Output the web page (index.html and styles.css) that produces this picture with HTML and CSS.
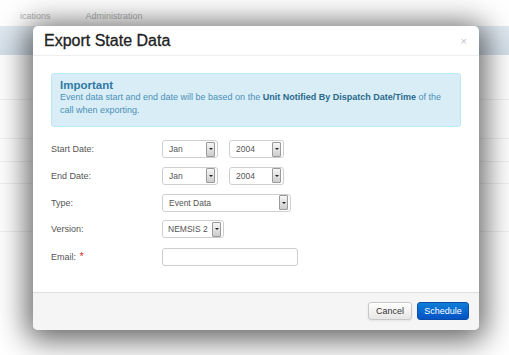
FILE: index.html
```html
<!DOCTYPE html>
<html>
<head>
<meta charset="utf-8">
<link rel="stylesheet" href="styles.css">
</head>
<body>
<div class="page">
  <div class="tabs">
    <span class="tab tab-first">ications</span>
    <span class="tab">Administration</span>
  </div>
  <div class="navbar"></div>
  <div class="content">
    <div class="row r1"></div>
    <div class="row r2"></div>
    <div class="row r3"></div>
    <div class="row r4"></div>
    <div class="row r5"></div>
  </div>
</div>

<div class="modal">
  <div class="modal-header">
    <h3 class="modal-title">Export State Data</h3>
    <span class="close">×</span>
  </div>
  <div class="modal-body">
    <div class="alert">
      <h4 class="alert-heading">Important</h4>
      <p class="alert-text">Event data start and end date will be based on the <b>Unit Notified By Dispatch Date/Time</b> of the call when exporting.</p>
    </div>
    <div class="form">
      <label class="label">Start Date:</label>
      <div class="controls">
        <div class="select w-month"><span class="value">Jan</span><span class="btn-arrow"><i class="tri"></i></span></div>
        <div class="select w-year"><span class="value">2004</span><span class="btn-arrow"><i class="tri"></i></span></div>
      </div>
      <label class="label">End Date:</label>
      <div class="controls">
        <div class="select w-month"><span class="value">Jan</span><span class="btn-arrow"><i class="tri"></i></span></div>
        <div class="select w-year"><span class="value">2004</span><span class="btn-arrow"><i class="tri"></i></span></div>
      </div>
      <label class="label">Type:</label>
      <div class="controls">
        <div class="select w-type"><span class="value">Event Data</span><span class="btn-arrow"><i class="tri"></i></span></div>
      </div>
      <label class="label">Version:</label>
      <div class="controls">
        <div class="select w-version"><span class="value">NEMSIS 2</span><span class="btn-arrow"><i class="tri"></i></span></div>
      </div>
      <label class="label">Email: <span class="req">*</span></label>
      <div class="controls">
        <div class="input"></div>
      </div>
    </div>
  </div>
  <div class="modal-footer">
    <button class="btn btn-default">Cancel</button>
    <button class="btn btn-primary">Schedule</button>
  </div>
</div>
</body>
</html>
```

FILE: styles.css
```css
html, body {
  margin: 0;
  padding: 0;
  background: #ffffff;
  font-family: "Liberation Sans", Arial, sans-serif;
  width: 509px;
  height: 355px;
  overflow: hidden;
}

.page {
  width: 509px;
  height: 355px;
}

.tabs {
  height: 26px;
  display: flex;
  align-items: flex-start;
  padding-top: 10px;
  box-sizing: border-box;
  font-size: 9px;
  line-height: 12px;
  color: #b0b0b0;
}

.tab-first {
  margin-left: 20px;
  margin-right: 35px;
}

.navbar {
  height: 29px;
  background: linear-gradient(#e2eaf1, #d3dfe9);
}

.content {
  display: flex;
  flex-direction: column;
}

.row {
  border-bottom: 1px solid #f1f1f1;
}
.r1 { height: 44px; }
.r2 { height: 38px; }
.r3 { height: 22px; }
.r4 { height: 21px; }
.r5 { height: 47px; }

.modal {
  position: absolute;
  left: 33px;
  top: 26px;
  width: 446px;
  background: #ffffff;
  border-radius: 5px;
  box-shadow: 0 4px 30px 6px rgba(0, 0, 0, 0.62);
  overflow: hidden;
}

.modal-header {
  height: 30px;
  box-sizing: border-box;
  border-bottom: 1px solid #eeeeee;
  padding: 0 11px;
  display: flex;
  align-items: center;
  justify-content: space-between;
}

.modal-title {
  margin: 0;
  font-size: 16px;
  font-weight: normal;
  line-height: 29px;
  color: #222222;
  -webkit-text-stroke: 0.3px #222;
}

.close {
  font-size: 11px;
  color: #c4c4c4;
  line-height: 12px;
  margin-right: 1px;
}

.modal-body {
  padding: 17px 18px 26px;
}

.alert {
  background: #d9edf7;
  border: 1px solid #bce8f1;
  border-radius: 3px;
  padding: 5px 16px 9px 8px;
  color: #4a90b8;
  margin-bottom: 13px;
}

.alert-heading {
  margin: 0;
  font-size: 11.5px;
  line-height: 12px;
  font-weight: bold;
  color: #2f7aa3;
}

.alert-text {
  margin: 0;
  font-size: 9px;
  line-height: 13px;
}

.alert-text b {
  color: #2a6a8c;
}

.form {
  display: grid;
  grid-template-columns: 111px auto;
  row-gap: 8.75px;
  align-items: center;
}

.label {
  font-size: 9px;
  color: #555555;
  line-height: 18px;
}

.req {
  color: #e03030;
  font-size: 11px;
  margin-left: 1px;
}

.controls {
  display: flex;
  gap: 11px;
  height: 18px;
}

.select {
  height: 18px;
  box-sizing: border-box;
  border: 1px solid #cfcfcf;
  border-radius: 3px;
  background: #ffffff;
  display: flex;
  align-items: center;
  justify-content: space-between;
  padding: 0 2px 0 6px;
  font-size: 8.5px;
  color: #555555;
}

.w-month { width: 56px; }
.w-year { width: 55px; }
.w-type { width: 129px; }
.w-version { width: 62px; padding-left: 5px; }

.btn-arrow {
  width: 9px;
  height: 15px;
  box-sizing: border-box;
  border: 1px solid #9a9a9a;
  border-radius: 1px;
  background: linear-gradient(#f6f6f6, #cdcdcd);
  display: flex;
  align-items: center;
  justify-content: center;
}

.tri {
  width: 0;
  height: 0;
  border-left: 2px solid transparent;
  border-right: 2px solid transparent;
  border-top: 2px solid #222222;
}

.input {
  width: 136px;
  height: 18px;
  box-sizing: border-box;
  border: 1px solid #cccccc;
  border-radius: 3px;
  background: #ffffff;
}

.modal-footer {
  background: #f5f5f5;
  border-top: 1px solid #dddddd;
  padding: 9px 10px 10px;
  display: flex;
  justify-content: flex-end;
  gap: 5px;
}

.btn {
  height: 18px;
  box-sizing: border-box;
  font-family: "Liberation Sans", Arial, sans-serif;
  font-size: 9px;
  line-height: 16px;
  padding: 0;
  border-radius: 3px;
  cursor: pointer;
}

.btn-default {
  width: 44px;
  color: #333333;
  background: linear-gradient(#ffffff, #e6e6e6);
  border: 1px solid #c8c8c8;
  box-shadow: 0 1px 2px rgba(0,0,0,.08);
}

.btn-primary {
  width: 52px;
  color: #ffffff;
  background: linear-gradient(#0d7ed8, #0452c4);
  border: 1px solid #0a4eaa;
}
```
